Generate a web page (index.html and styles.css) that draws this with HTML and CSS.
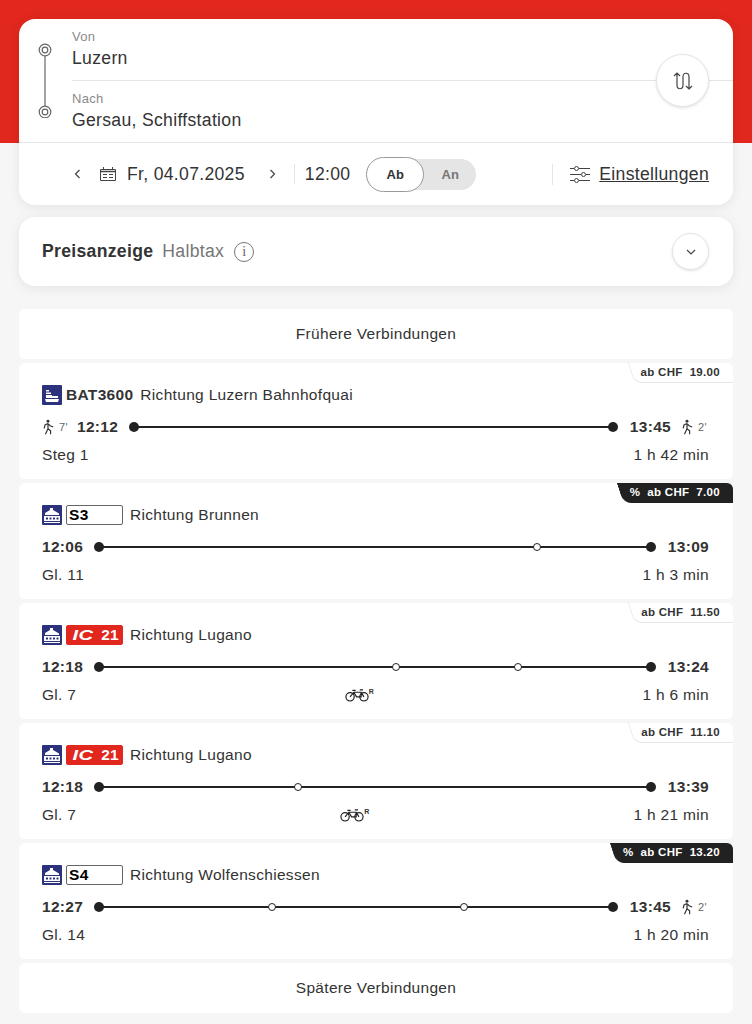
FILE: index.html
```html
<!DOCTYPE html>
<html lang="de">
<head>
  <meta charset="UTF-8">
  <title>Fahrplan</title>
  <link rel="stylesheet" href="styles.css">
</head>
<body>
  <svg class="sprites" width="0" height="0">
    <symbol id="ship" viewBox="0 0 20 20">
      <rect width="20" height="20" rx="1" fill="#2d327d"/>
      <path d="M4 5h3v1.500H4zM4 7.500h5v1.500H4zM4 10h6v1h6v2H4zM3 14h14l-1 3H4z" fill="#fff"/>
    </symbol>
    <symbol id="train" viewBox="0 0 20 20">
      <rect width="20" height="20" rx="1" fill="#2d327d"/>
      <path d="M8 3h3v2l6 3.500V10H3V8l5-3zM2 11h16v5H2z" fill="#fff"/>
      <path d="M4 12.500h2v2H4zM7.500 12.500h2v2h-2zM11 12.500h2v2h-2zM14.500 12.500h2v2h-2z" fill="#2d327d"/>
      <path d="M2 17h16v1H2z" fill="#fff"/>
    </symbol>
    <symbol id="walk" viewBox="0 0 14 18">
      <circle cx="7" cy="2.200" r="1.700" fill="#333"/>
      <path d="M7 5L3.500 6.500 2.500 10.500M7 5l2.500 2.500L13 9M7 5v6L4 17.500M7 11l3 2.500v4" fill="none" stroke="#333" stroke-width="1.400"/>
    </symbol>
    <symbol id="bike" viewBox="0 0 26 14">
      <g fill="none" stroke="#222" stroke-width="1.300">
        <circle cx="5.500" cy="9" r="4.500"/>
        <circle cx="20.500" cy="9" r="4.500"/>
        <path d="M5.500 9l4-5h8l3 5M9.500 4l3 5h5l0-5M8 2h3.500M16 1.500h3.500"/>
      </g>
    </symbol>
  </svg>

  <div class="hero"></div>
  <main class="page">
    <section class="search">
      <div class="stations">
        <svg class="route-icon" width="16" height="76" viewBox="0 0 16 76">
          <g fill="none" stroke="#666" stroke-width="1.200">
            <circle cx="8" cy="8" r="5.800"/>
            <circle cx="8" cy="8" r="2.800"/>
            <circle cx="8" cy="70" r="5.800"/>
            <circle cx="8" cy="70" r="2.800"/>
            <path d="M8 14v50"/>
          </g>
        </svg>
        <div class="fields">
          <div class="field">
            <span class="field-label">Von</span>
            <span class="field-value">Luzern</span>
          </div>
          <div class="field field-to">
            <span class="field-label">Nach</span>
            <span class="field-value">Gersau, Schiffstation</span>
          </div>
        </div>
        <button class="swap">
          <svg width="20" height="20" viewBox="0 0 20 20" fill="none" stroke="#444" stroke-width="1.200">
            <path d="M1 5l3-3 3 3M4 2v12c0 5 6 5 6 0V6c0-5 6-5 6 0v12M13 15l3 3 3-3"/>
          </svg>
        </button>
      </div>
      <div class="when">
        <svg class="chev" width="7" height="10" viewBox="0 0 7 10" fill="none" stroke="#444" stroke-width="1.200"><path d="M5.500 1l-4 4 4 4"/></svg>
        <svg class="cal" width="16" height="14" viewBox="0 0 16 14" fill="none" stroke="#444">
          <path d="M.5 2.500h15v11H.5zM3.500 0v3M12.500 0v3"/>
          <path d="M.5 4.500h15" stroke-width="1.500"/>
          <path d="M3 7.500h4M9 7.500h4M3 10.500h4M9 10.500h4"/>
        </svg>
        <span class="date">Fr, 04.07.2025</span>
        <svg class="chev chev-next" width="7" height="10" viewBox="0 0 7 10" fill="none" stroke="#444" stroke-width="1.200"><path d="M1.500 1l4 4-4 4"/></svg>
        <span class="time">12:00</span>
        <div class="toggle">
          <span class="toggle-on">Ab</span>
          <span class="toggle-off">An</span>
        </div>
        <a href="#" class="settings">
          <svg width="20" height="18" viewBox="0 0 20 18" fill="none" stroke="#444">
            <path d="M0 3.500h4M9 3.500h11M0 9.500h11M16 9.500h4M0 15.500h4M9 15.500h11"/>
            <circle cx="6.500" cy="3.500" r="2"/>
            <circle cx="13.500" cy="9.500" r="2"/>
            <circle cx="6.500" cy="15.500" r="2"/>
          </svg>
          <span>Einstellungen</span>
        </a>
      </div>
    </section>

    <section class="price">
      <strong>Preisanzeige</strong>
      <span class="price-kind">Halbtax</span>
      <span class="info">i</span>
      <button class="expand">
        <svg width="10" height="6" viewBox="0 0 10 6" fill="none" stroke="#444" stroke-width="1.200"><path d="M1 1l4 4 4-4"/></svg>
      </button>
    </section>

    <div class="list">
      <a href="#" class="more">Frühere Verbindungen</a>

      <article class="conn">
        <div class="tag">ab CHF&nbsp; 19.00</div>
        <div class="head">
          <svg class="mode"><use href="#ship"/></svg>
          <b class="bat">BAT3600</b>
          <span>Richtung Luzern Bahnhofquai</span>
        </div>
        <div class="line">
          <svg class="walk"><use href="#walk"/></svg><span class="mins mins-first">7'</span>
          <b>12:12</b>
          <div class="track"></div>
          <b>13:45</b>
          <svg class="walk walk-end"><use href="#walk"/></svg><span class="mins">2'</span>
        </div>
        <div class="foot"><span>Steg 1</span><span>1 h 42 min</span></div>
      </article>

      <article class="conn">
        <div class="tag tag-dark">%&nbsp; ab CHF&nbsp; 7.00</div>
        <div class="head">
          <svg class="mode"><use href="#train"/></svg>
          <b class="badge">S3</b>
          <span>Richtung Brunnen</span>
        </div>
        <div class="line">
          <b>12:06</b>
          <div class="track"><i style="left: 79.3%"></i></div>
          <b>13:09</b>
        </div>
        <div class="foot"><span>Gl. 11</span><span>1 h 3 min</span></div>
      </article>

      <article class="conn">
        <div class="tag">ab CHF&nbsp; 11.50</div>
        <div class="head">
          <svg class="mode"><use href="#train"/></svg>
          <b class="badge badge-ic"><em>IC</em> 21</b>
          <span>Richtung Lugano</span>
        </div>
        <div class="line">
          <b>12:18</b>
          <div class="track"><i style="left: 53.8%"></i><i style="left: 75.9%"></i></div>
          <b>13:24</b>
        </div>
        <div class="foot">
          <span>Gl. 7</span>
          <span class="bike"><svg><use href="#bike"/></svg><sup>R</sup></span>
          <span>1 h 6 min</span>
        </div>
      </article>

      <article class="conn">
        <div class="tag">ab CHF&nbsp; 11.10</div>
        <div class="head">
          <svg class="mode"><use href="#train"/></svg>
          <b class="badge badge-ic"><em>IC</em> 21</b>
          <span>Richtung Lugano</span>
        </div>
        <div class="line">
          <b>12:18</b>
          <div class="track"><i style="left: 36%"></i></div>
          <b>13:39</b>
        </div>
        <div class="foot">
          <span>Gl. 7</span>
          <span class="bike"><svg><use href="#bike"/></svg><sup>R</sup></span>
          <span>1 h 21 min</span>
        </div>
      </article>

      <article class="conn">
        <div class="tag tag-dark">%&nbsp; ab CHF&nbsp; 13.20</div>
        <div class="head">
          <svg class="mode"><use href="#train"/></svg>
          <b class="badge">S4</b>
          <span>Richtung Wolfenschiessen</span>
        </div>
        <div class="line">
          <b>12:27</b>
          <div class="track"><i style="left: 33.7%"></i><i style="left: 71%"></i></div>
          <b>13:45</b>
          <svg class="walk walk-end"><use href="#walk"/></svg><span class="mins">2'</span>
        </div>
        <div class="foot"><span>Gl. 14</span><span>1 h 20 min</span></div>
      </article>

      <a href="#" class="more">Spätere Verbindungen</a>
    </div>
  </main>
</body>
</html>
```

FILE: styles.css
```css
* {
  box-sizing: border-box;
}
body {
  margin: 0;
  background: #f6f6f6;
  color: #333;
  font-family: "Liberation Sans", Arial, sans-serif;
  font-size: 15.5px;
  letter-spacing: .02em;
}
a {
  color: inherit;
}
button {
  padding: 0;
  font: inherit;
}
.sprites {
  display: block;
}
.hero {
  height: 143px;
  margin-bottom: -143px;
  background: #e1271e;
}
.page {
  display: flex;
  flex-direction: column;
  padding: 19px 19px 0;
}

/* Suche */
.search {
  position: relative;
  height: 186px;
  background: #fff;
  border-radius: 16px;
  box-shadow: 0 2px 12px rgba(0, 0, 0, .08);
}
.stations {
  position: relative;
  display: flex;
  height: 124px;
  border-bottom: 1px solid #e5e5e5;
}
.route-icon {
  margin: 23px 0 0 18px;
}
.fields {
  flex: 1;
  margin-left: 19px;
}
.field {
  display: flex;
  flex-direction: column;
  height: 62px;
  padding-top: 10px;
  border-bottom: 1px solid #e5e5e5;
}
.field-to {
  border-bottom: 0;
}
.field-label {
  color: #8a8a8a;
  font-size: 13px;
  line-height: 16px;
}
.field-value {
  font-size: 17.6px;
  line-height: 26px;
}
.swap {
  position: absolute;
  top: 35px;
  right: 24px;
  display: flex;
  align-items: center;
  justify-content: center;
  width: 53px;
  height: 53px;
  background: #fff;
  border: 1px solid #e5e5e5;
  border-radius: 50%;
  box-shadow: 0 1px 3px rgba(0, 0, 0, .12);
}
.when {
  display: flex;
  align-items: center;
  height: 62px;
  padding: 0 24px 0 55px;
  font-size: 17.6px;
}
.cal {
  margin-left: 19px;
}
.date {
  margin-left: 11px;
}
.chev-next {
  margin-left: 24px;
}
.time {
  margin-left: 18px;
  padding-left: 10px;
  line-height: 20px;
  border-left: 1px solid #e5e5e5;
}
.toggle {
  display: flex;
  width: 110px;
  height: 31px;
  margin-left: 16px;
  background: #e5e5e5;
  border-radius: 16px;
  font-size: 13px;
  font-weight: bold;
}
.toggle-on {
  width: 58px;
  height: 35px;
  margin-top: -2px;
  line-height: 33px;
  text-align: center;
  background: #fff;
  border: 1px solid #999;
  border-radius: 18px;
}
.toggle-off {
  flex: 1;
  color: #767676;
  line-height: 31px;
  text-align: center;
}
.settings {
  display: flex;
  align-items: center;
  gap: 9px;
  margin-left: auto;
  padding-left: 17px;
  border-left: 1px solid #e5e5e5;
}

/* Preisanzeige */
.price {
  display: flex;
  align-items: center;
  height: 69px;
  margin-top: 12px;
  padding: 0 24px 0 23px;
  background: #fff;
  border-radius: 16px;
  box-shadow: 0 2px 12px rgba(0, 0, 0, .08);
  font-size: 17.6px;
}
.price-kind {
  margin-left: 9px;
  color: #767676;
}
.info {
  width: 20px;
  height: 20px;
  margin-left: 10px;
  color: #666;
  font-family: "Liberation Serif", serif;
  font-size: 14px;
  line-height: 17px;
  letter-spacing: 0;
  text-align: center;
  border: 1px solid #767676;
  border-radius: 50%;
}
.expand {
  display: flex;
  align-items: center;
  justify-content: center;
  width: 37px;
  height: 37px;
  margin-left: auto;
  background: #fff;
  border: 1px solid #e5e5e5;
  border-radius: 50%;
  box-shadow: 0 1px 3px rgba(0, 0, 0, .12);
}

/* Verbindungen */
.list {
  display: flex;
  flex-direction: column;
  gap: 4px;
  margin-top: 23px;
}
.more {
  height: 50px;
  line-height: 50px;
  text-align: center;
  text-decoration: none;
  background: #fff;
  border-radius: 6px;
}
.conn {
  position: relative;
  height: 116px;
  padding: 22px 24px 0 23px;
  overflow: hidden;
  background: #fff;
  border-radius: 6px;
}
.tag {
  position: absolute;
  top: 0;
  right: 0;
  z-index: 0;
  height: 20px;
  padding: 0 13px 0 10px;
  font-size: 11.5px;
  font-weight: bold;
  line-height: 19px;
}
.tag::before {
  content: "";
  position: absolute;
  top: 0;
  right: -10px;
  bottom: 0;
  left: 0;
  z-index: -1;
  background: #fff;
  border-bottom: 1px solid #e5e5e5;
  border-left: 1px solid #e5e5e5;
  border-bottom-left-radius: 8px;
  transform: skewX(18deg);
}
.tag-dark {
  color: #fff;
}
.tag-dark::before {
  background: #212121;
  border-color: #212121;
}
.head {
  display: flex;
  align-items: center;
  gap: 4px;
  height: 20px;
}
.head span {
  margin-left: 3px;
}
.mode {
  width: 20px;
  height: 20px;
}
.badge {
  width: 57px;
  height: 20px;
  padding-left: 2px;
  line-height: 18px;
  color: #000;
  border: 1px solid #666;
  border-radius: 2px;
}
.badge-ic {
  padding-right: 3px;
  color: #fff;
  text-align: right;
  background: #e1271e;
  border-color: #e1271e;
}
.badge-ic em {
  display: inline-block;
  margin-right: 5px;
  transform: scaleX(1.3);
}
.line {
  display: flex;
  align-items: center;
  height: 20px;
  margin-top: 12px;
}
.track {
  position: relative;
  flex: 1;
  height: 2px;
  margin: 0 17px 0 16px;
  background: #222;
}
.track::before,
.track::after {
  content: "";
  position: absolute;
  top: -4px;
  width: 10px;
  height: 10px;
  background: #222;
  border-radius: 50%;
}
.track::before {
  left: -5px;
}
.track::after {
  right: -5px;
}
.track i {
  position: absolute;
  top: -3px;
  width: 8px;
  height: 8px;
  margin-left: -4px;
  background: #fff;
  border: 1.500px solid #222;
  border-radius: 50%;
}
.walk {
  width: 12px;
  height: 16px;
}
.walk-end {
  margin-left: 10px;
}
.mins {
  width: 16px;
  padding-left: 5px;
  font-size: 11px;
  color: #666;
}
.mins-first {
  width: 23px;
}
.foot {
  display: flex;
  justify-content: space-between;
  align-items: center;
  height: 20px;
  margin-top: 8px;
}
.bike {
  display: flex;
}
.bike svg {
  width: 24px;
  height: 14px;
}
.bike sup {
  font-size: 7px;
  font-weight: bold;
  line-height: 8px;
}
```
